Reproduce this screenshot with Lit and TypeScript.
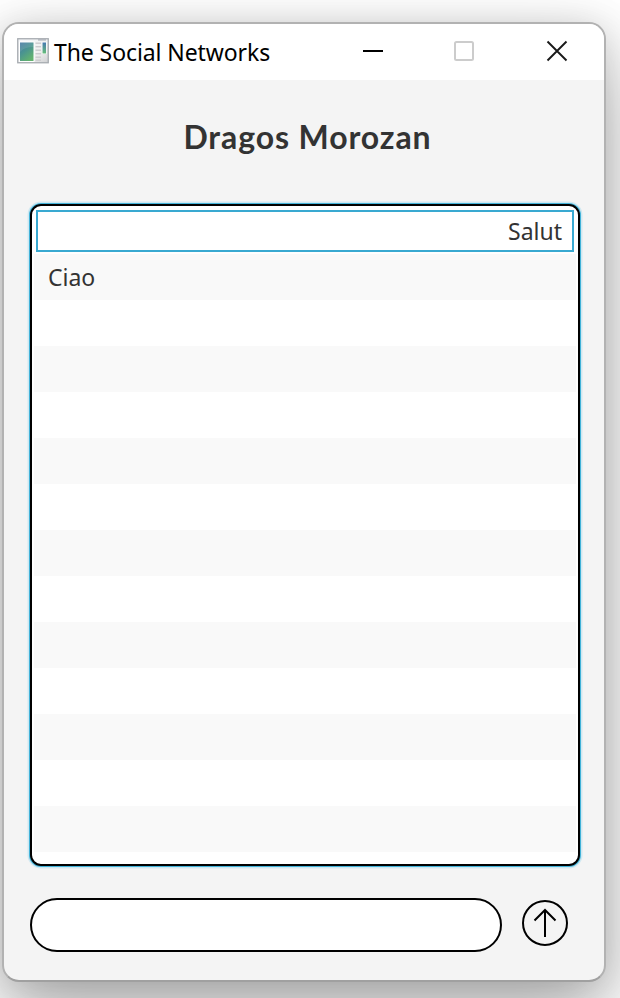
import { LitElement, html, css, svg } from "lit";
import { customElement, state } from "lit/decorators.js";
import { classMap } from "lit/directives/class-map.js";

interface Message {
  text: string;
  mine: boolean;
}

@customElement("app-icon")
class AppIcon extends LitElement {
  static styles = css`:host { display: block; width: 32px; height: 26px; margin-bottom: 2px; } svg { display: block; }`;
  render() {
    return html`<svg width="32" height="26" viewBox="0 0 32 26">
      <defs>
        <linearGradient id="pane" x1="0" y1="0" x2="0.6" y2="1">
          <stop offset="0" stop-color="#4779a4" />
          <stop offset="0.5" stop-color="#4a9490" />
          <stop offset="1" stop-color="#62b26f" />
        </linearGradient>
        <linearGradient id="strip" x1="0" y1="0" x2="0" y2="1">
          <stop offset="0" stop-color="#4779b0" />
          <stop offset="1" stop-color="#66bd79" />
        </linearGradient>
        <linearGradient id="frame" x1="0" y1="0" x2="1" y2="1">
          <stop offset="0" stop-color="#f4f6f9" />
          <stop offset="0.6" stop-color="#f1f1f1" />
          <stop offset="1" stop-color="#cfd0d2" />
        </linearGradient>
      </defs>
      <rect x="0.75" y="0.75" width="30.5" height="24" fill="url(#frame)" stroke="#a6abb0" stroke-width="1.3" />
      <rect x="21" y="1" width="8" height="1.6" fill="#b4b8bf" />
      <rect x="2" y="3.5" width="15.5" height="20.5" fill="#fff" />
      <rect x="3" y="4.5" width="13.5" height="18.5" fill="url(#pane)" />
      <path d="M3 14Q7 9 16.5 9V4.5H3Z" fill="#fff" opacity=".1" />
      ${[4.5, 8, 11.5, 15, 18.5, 21.5].map((y) => svg`<rect x="18.5" y=${y} width="5.5" height="1.4" fill="#cbcbce" />`)}
      <rect x="25" y="4" width="4.5" height="12" fill="#fff" />
      <rect x="25.5" y="4.5" width="3.5" height="11" fill="url(#strip)" />
    </svg>`;
  }
}

@customElement("app-root")
class AppRoot extends LitElement {
  @state() messages: Message[] = [
    { text: "Salut", mine: true },
    { text: "Ciao", mine: false },
  ];

  static styles = css`
    :host {
      display: block;
      box-sizing: border-box;
      width: 620px;
      height: 998px;
      padding: 22px 14px 16px 2px;
      overflow: hidden;
      background: #fff;
      font-family: "Noto Sans", "Open Sans", sans-serif;
    }
    * { box-sizing: border-box; }
    svg { display: block; }
    .window {
      width: 604px;
      height: 960px;
      border: 2px solid #b2b2b2;
      border-bottom-color: #a0a0a0;
      border-radius: 17px;
      background: #f4f4f4;
      display: flex;
      flex-direction: column;
      box-shadow: 0 36px 76px rgba(0, 0, 0, 0.3), 0 2px 36px rgba(0, 0, 0, 0.14);
    }
    .titlebar {
      height: 56px;
      flex: none;
      background: #fff;
      border-radius: 15px 15px 0 0;
      display: flex;
      align-items: center;
      padding: 0 36px 0 13px;
    }
    .title {
      margin-left: 5px;
      flex: 1;
      font-size: 23px;
      letter-spacing: -0.09px;
      line-height: 32px;
      color: #000;
      white-space: nowrap;
    }
    .controls { display: flex; gap: 69px; align-items: center; padding-bottom: 2px; }
    .close { margin-left: 2px; }
    .heading {
      margin: 37px 0 0;
      padding-left: 7px;
      height: 41px;
      text-align: center;
      font: 700 32px/40px Lato, sans-serif;
      letter-spacing: 0.9px;
      color: #333;
      white-space: nowrap;
    }
    .list {
      margin: 46px 24px 0 26px;
      height: 662px;
      flex: none;
      border: 2px solid #000;
      border-radius: 11px;
      padding: 2px;
      background: #fff;
      box-shadow: 0 0 0 1px #42b2d8, 0 0 0 2.5px #cfe8f1;
    }
    .row {
      height: 46px;
      padding: 0 14px;
      font-size: 23px;
      line-height: 47px;
      color: #333;
    }
    .row.odd { background: #f9f9f9; }
    .row.mine { text-align: right; }
    .row.focused {
      height: 42px;
      margin: 2px;
      padding: 0 10px;
      line-height: 39px;
      border: 2px solid #39a9d1;
    }
    .composer { display: flex; margin: 32px 36px 0 26px; gap: 20px; align-items: flex-start; }
    .field {
      width: 472px;
      height: 54px;
      border: 2px solid #000;
      border-radius: 27px;
      background: #fff;
      padding: 0 20px;
      outline: none;
      font: inherit;
    }
    .send { margin: 2px 0 0; padding: 0; border: 0; background: none; width: 46px; height: 46px; }
  `;

  render() {
    const rows = Array.from({ length: 14 }, (_, i) => this.messages[i]);
    return html`
      <div class="window">
        <div class="titlebar">
          <app-icon></app-icon>
          <span class="title">The Social Networks</span>
          <div class="controls">
            <svg width="22" height="22"><path d="M1 11H21" stroke="#000" stroke-width="2" /></svg>
            <svg width="22" height="22"><rect x="2" y="2" width="18" height="18" rx="1.5" fill="none" stroke="#ccc" stroke-width="2" /></svg>
            <svg class="close" width="22" height="22"><path d="M1.5 1.5L20.5 20.5M20.5 1.5L1.5 20.5" stroke="#191919" stroke-width="1.9" /></svg>
          </div>
        </div>
        <h1 class="heading">Dragos Morozan</h1>
        <div class="list">
          ${rows.map(
            (m, i) => html`<div class=${classMap({ row: true, odd: i % 2 === 1, mine: !!m?.mine, focused: i === 0 })}>${m?.text}</div>`
          )}
        </div>
        <div class="composer">
          <input class="field" />
          <button class="send" aria-label="Send">
            <svg width="46" height="46" fill="none" stroke="#000" stroke-width="2">
              <circle cx="23" cy="23" r="22" />
              <path d="M23 37V10M12.5 20.5L23 10L33.5 20.5" />
            </svg>
          </button>
        </div>
      </div>
    `;
  }
}
